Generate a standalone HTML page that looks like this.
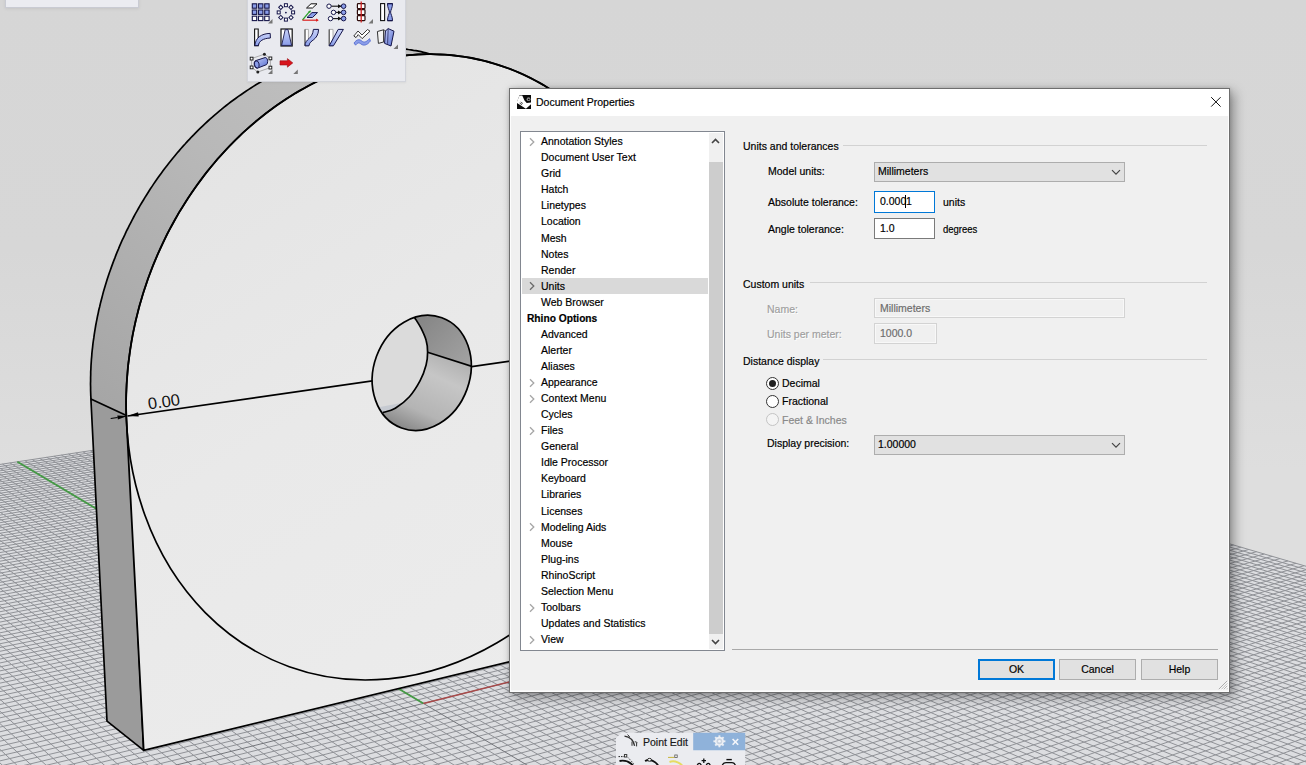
<!DOCTYPE html>
<html><head><meta charset="utf-8"><title>Rhino - Document Properties</title>
<style>
*{box-sizing:border-box;margin:0;padding:0}
html,body{width:1306px;height:765px;overflow:hidden}
body{position:relative;font-family:"Liberation Sans",sans-serif;font-size:11.6px;color:#000;
 background:linear-gradient(#d6d6d6 0,#d7d7d7 250px,#dedede 470px,#dedede 100%)}
.abs{position:absolute}
#scene{position:absolute;left:0;top:0}
.t{position:absolute;white-space:nowrap;-webkit-text-stroke:.2px currentColor;transform-origin:0 50%;transform:scaleX(.905);line-height:16px;height:16px}
.dis{color:#a0a0a0;text-shadow:1px 1px 0 #fff}
/* dialog */
#dlg{position:absolute;left:509px;top:88px;width:721px;height:605px;background:#f0f0f0;border:1px solid #6e6e6e;
 box-shadow:inset 1px 0 #fdfdfd,inset -1px 0 #fdfdfd,inset 0 -1.5px #fdfdfd,4px 4px 11px rgba(0,0,0,.36), 0 0 4px rgba(0,0,0,.16)}
#dlg .title{position:absolute;left:0;top:0;right:0;height:27px;background:#fff}
#tree{position:absolute;left:10px;top:42px;width:205px;height:520px;background:#fff;border:1px solid #828790}
#tree .sb{position:absolute;right:1px;top:1px;width:14px;bottom:1px;background:#f0f0f0}
#tree .thumb{position:absolute;right:1px;top:30px;width:14px;height:472px;background:#cdcdcd}
#tree .sel{position:absolute;left:1px;top:146px;width:186px;height:16px;background:#d9d9d9}
.ti{left:20px}
.chev{position:absolute;left:6px;width:8px;height:10px}
.grp{position:absolute;height:1px;background:#d2d2d2;border-bottom:0}
.combo{position:absolute;background:#e1e1e1;border:1px solid #adadad;height:21px}
.edit{position:absolute;background:#fff;border:1px solid #7a7a7a;height:22px}
.edis{position:absolute;background:#f0f0f0;border:1px solid #d3d3d3;box-shadow:inset 0 0 0 1px #f8f8f8;height:21px}
.btn{position:absolute;top:570px;width:77px;height:22px;background:#e1e1e1;border:1px solid #adadad}
.radio{position:absolute;width:13px;height:13px;border-radius:50%;border:1px solid #333;background:#fff}
</style></head><body>
<svg id="scene" width="1306" height="765" viewBox="0 0 1306 765"><defs>
<linearGradient id="gfill" x1="0" y1="0" x2="0" y2="1"><stop offset="0" stop-color="#dcdde0"/><stop offset="1" stop-color="#dedfe2"/></linearGradient>
<linearGradient id="band" gradientUnits="userSpaceOnUse" x1="400" y1="50" x2="100" y2="400"><stop offset="0" stop-color="#c2c2c2"/><stop offset=".45" stop-color="#b8b8b8"/><stop offset="1" stop-color="#a6a6a6"/></linearGradient>
<linearGradient id="face" gradientUnits="userSpaceOnUse" x1="150" y1="100" x2="520" y2="700"><stop offset="0" stop-color="#e3e3e3"/><stop offset=".5" stop-color="#e9e9e9"/><stop offset="1" stop-color="#ececec"/></linearGradient>
<linearGradient id="hw1" gradientUnits="userSpaceOnUse" x1="425" y1="318" x2="470" y2="362"><stop offset="0" stop-color="#878787"/><stop offset="1" stop-color="#a2a2a2"/></linearGradient>
<linearGradient id="hw2" gradientUnits="userSpaceOnUse" x1="450" y1="355" x2="415" y2="432"><stop offset="0" stop-color="#b0b0b0"/><stop offset=".3" stop-color="#c6c6c6"/><stop offset=".75" stop-color="#b4b4b4"/><stop offset="1" stop-color="#8c8c8c"/></linearGradient>
</defs>
<path d="M-1053.0 3088.4 L-546.6 2740.3 L-140.5 2461.1 L192.3 2232.3 L470.1 2041.4 L705.4 1879.6 L907.3 1740.8 L1082.4 1620.4 L1235.8 1514.9 L1371.2 1421.8 L1491.7 1339.0 L1599.5 1264.9 L1696.6 1198.2 L1784.5 1137.7 L1864.4 1082.8 L1937.4 1032.6 L2004.4 986.6 L2066.0 944.2 L2122.9 905.1 L2175.5 868.9 L2224.5 835.3 L2069.2 789.8 L1928.8 748.6 L1801.0 711.2 L1684.4 677.1 L1577.4 645.7 L1479.0 616.9 L1388.2 590.3 L1304.1 565.7 L1226.0 542.8 L1153.2 521.5 L1085.3 501.6 L1021.8 483.0 L962.2 465.5 L906.3 449.1 L853.6 433.7 L804.0 419.2 L757.1 405.4 L712.7 392.4 L670.6 380.1 L630.8 368.4 L579.2 376.3 L525.7 384.4 L470.3 392.9 L412.9 401.6 L353.2 410.7 L291.3 420.1 L226.9 429.9 L159.8 440.1 L90.1 450.7 L17.4 461.8 L-58.4 473.4 L-137.6 485.4 L-220.3 498.0 L-306.8 511.2 L-397.3 524.9 L-492.2 539.4 L-591.8 554.6 L-696.4 570.5 L-806.4 587.2 L-922.3 604.9 L-923.8 632.7 L-925.4 662.9 L-927.1 695.7 L-929.0 731.7 L-931.1 771.1 L-933.4 814.6 L-935.9 862.7 L-938.7 916.4 L-941.9 976.6 L-945.5 1044.6 L-949.5 1122.0 L-954.2 1210.9 L-959.6 1313.9 L-966.0 1435.0 L-973.6 1579.1 L-982.8 1753.7 L-994.1 1969.3 L-1008.5 2242.7 L-1027.3 2600.3Z" fill="url(#gfill)"/>
<path d="M1306.9 785.0L1326.0 777.7M1284.9 785.0L1326.0 769.4M1262.9 785.0L1326.0 761.2M1240.8 785.0L1326.0 753.3M1218.8 785.0L1326.0 745.4M1196.8 785.0L1326.0 737.7M1174.8 785.0L1326.0 730.2M1152.8 785.0L1326.0 722.8M1130.8 785.0L1326.0 715.5M1108.8 785.0L1326.0 708.4M1086.7 785.0L1326.0 701.4M1064.7 785.0L1326.0 694.5M1042.7 785.0L1326.0 687.7M1020.7 785.0L1326.0 681.1M998.7 785.0L1326.0 674.5M976.7 785.0L1326.0 668.1M954.7 785.0L1326.0 661.8M-6.6 785.0L-20.0 771.8M932.6 785.0L1326.0 655.6M8.4 785.0L-20.0 757.7M910.6 785.0L1326.0 649.5M23.3 785.0L-20.0 744.0M888.6 785.0L1326.0 643.5M38.2 785.0L-20.0 730.8M866.6 785.0L1326.0 637.6M53.1 785.0L-20.0 718.0M844.6 785.0L1326.0 631.8M68.1 785.0L-20.0 705.6M822.6 785.0L1326.0 626.1M83.0 785.0L-20.0 693.5M800.5 785.0L1326.0 620.5M97.9 785.0L-20.0 681.9M778.5 785.0L1326.0 614.9M112.8 785.0L-20.0 670.6M756.5 785.0L1326.0 609.5M127.8 785.0L-20.0 659.6M734.5 785.0L1326.0 604.1M142.7 785.0L-20.0 648.9M712.5 785.0L1326.0 598.8M157.6 785.0L-20.0 638.5M690.5 785.0L1326.0 593.6M172.5 785.0L-20.0 628.5M668.5 785.0L1326.0 588.5M187.5 785.0L-20.0 618.7M646.4 785.0L1326.0 583.5M202.4 785.0L-20.0 609.2M624.4 785.0L1326.0 578.5M217.3 785.0L-20.0 599.9M602.4 785.0L1326.0 573.6M232.2 785.0L-20.0 590.9M580.4 785.0L1320.4 570.4M247.1 785.0L-20.0 582.1M558.4 785.0L1312.2 568.0M262.1 785.0L-20.0 573.6M536.4 785.0L1304.1 565.7M277.0 785.0L-20.0 565.2M514.3 785.0L1296.0 563.3M291.9 785.0L-20.0 557.1M492.3 785.0L1288.0 560.9M306.8 785.0L-20.0 549.2M470.3 785.0L1280.0 558.6M321.8 785.0L-20.0 541.5M448.3 785.0L1272.2 556.3M336.7 785.0L-20.0 533.9M426.3 785.0L1264.3 554.0M351.6 785.0L-20.0 526.6M404.3 785.0L1256.5 551.7M366.5 785.0L-20.0 519.4M382.3 785.0L1248.8 549.5M381.5 785.0L-20.0 512.4M360.2 785.0L1241.1 547.2M396.4 785.0L-20.0 505.5M338.2 785.0L1233.5 545.0M411.3 785.0L-20.0 498.9M316.2 785.0L1226.0 542.8M426.2 785.0L-20.0 492.3M294.2 785.0L1218.5 540.6M441.2 785.0L-20.0 485.9M272.2 785.0L1211.0 538.4M456.1 785.0L-20.0 479.7M250.2 785.0L1203.6 536.2M471.0 785.0L-20.0 473.6M228.1 785.0L1196.3 534.1M485.9 785.0L-20.0 467.6M206.1 785.0L1189.0 531.9M500.8 785.0L-12.6 466.4M184.1 785.0L1181.7 529.8M515.8 785.0L-5.0 465.2M162.1 785.0L1174.5 527.7M530.7 785.0L2.5 464.1M140.1 785.0L1167.4 525.6M545.6 785.0L9.9 462.9M118.1 785.0L1160.3 523.5M575.5 785.0L24.8 460.7M74.0 785.0L1146.2 519.4M590.4 785.0L32.2 459.6M52.0 785.0L1139.3 517.4M605.3 785.0L39.5 458.4M30.0 785.0L1132.4 515.4M620.2 785.0L46.8 457.3M8.0 785.0L1125.5 513.4M635.2 785.0L54.1 456.2M-14.0 785.0L1118.7 511.4M650.1 785.0L61.4 455.1M-20.0 781.2L1111.9 509.4M665.0 785.0L68.6 454.0M-20.0 775.9L1105.2 507.4M679.9 785.0L75.8 452.9M-20.0 770.8L1098.5 505.5M694.9 785.0L82.9 451.8M-20.0 765.6L1091.9 503.5M709.8 785.0L90.1 450.7M-20.0 760.6L1085.3 501.6M724.7 785.0L97.2 449.7M-20.0 755.6L1078.8 499.7M739.6 785.0L104.3 448.6M-20.0 750.7L1072.3 497.8M754.5 785.0L111.3 447.5M-20.0 745.8L1065.8 495.9M769.5 785.0L118.3 446.4M-20.0 741.0L1059.4 494.0M784.4 785.0L125.3 445.4M-20.0 736.3L1053.0 492.1M799.3 785.0L132.3 444.3M-20.0 731.6L1046.7 490.3M814.2 785.0L139.2 443.3M-20.0 726.9L1040.4 488.4M829.2 785.0L146.1 442.2M-20.0 722.3L1034.2 486.6M844.1 785.0L153.0 441.2M-20.0 717.8L1028.0 484.8M859.0 785.0L159.8 440.1M-20.0 713.3L1021.8 483.0M873.9 785.0L166.7 439.1M-20.0 708.9L1015.7 481.2M888.9 785.0L173.5 438.1M-20.0 704.5L1009.6 479.4M903.8 785.0L180.2 437.0M-20.0 700.1L1003.5 477.6M918.7 785.0L187.0 436.0M-20.0 695.9L997.5 475.9M933.6 785.0L193.7 435.0M-20.0 691.6L991.5 474.1M948.6 785.0L200.4 434.0M-20.0 687.4L985.6 472.4M963.5 785.0L207.0 432.9M-20.0 683.3L979.7 470.6M978.4 785.0L213.7 431.9M-20.0 679.2L973.9 468.9M993.3 785.0L220.3 430.9M-20.0 675.1L968.0 467.2M1008.2 785.0L226.9 429.9M-20.0 671.1L962.2 465.5M1023.2 785.0L233.4 428.9M-20.0 667.1L956.5 463.8M1038.1 785.0L239.9 427.9M-20.0 663.2L950.8 462.2M1053.0 785.0L246.4 426.9M-20.0 659.3L945.1 460.5M1067.9 785.0L252.9 426.0M-20.0 655.4L939.4 458.9M1082.9 785.0L259.4 425.0M-20.0 651.6L933.8 457.2M1097.8 785.0L265.8 424.0M-20.0 647.8L928.3 455.6M1112.7 785.0L272.2 423.0M-20.0 644.1L922.7 454.0M1127.6 785.0L278.6 422.0M-20.0 640.4L917.2 452.3M1142.6 785.0L284.9 421.1M-20.0 636.8L911.7 450.7M1157.5 785.0L291.3 420.1M-20.0 633.1L906.3 449.1M1172.4 785.0L297.6 419.2M-20.0 629.5L900.9 447.6M1187.3 785.0L303.8 418.2M-20.0 626.0L895.5 446.0M1202.3 785.0L310.1 417.2M-20.0 622.5L890.2 444.4M1217.2 785.0L316.3 416.3M-20.0 619.0L884.8 442.9M1232.1 785.0L322.5 415.4M-20.0 615.6L879.6 441.3M1247.0 785.0L328.7 414.4M-20.0 612.2L874.3 439.8M1261.9 785.0L334.9 413.5M-20.0 608.8L869.1 438.2M1276.9 785.0L341.0 412.5M-20.0 605.4L863.9 436.7M1291.8 785.0L347.1 411.6M-20.0 602.1L858.7 435.2M1306.7 785.0L353.2 410.7M-20.0 598.9L853.6 433.7M1321.6 785.0L359.3 409.8M-20.0 595.6L848.5 432.2M1326.0 780.9L365.3 408.8M-20.0 592.4L843.5 430.7M1326.0 775.2L371.4 407.9M-20.0 589.2L838.4 429.3M1326.0 769.6L377.4 407.0M-20.0 586.1L833.4 427.8M1326.0 764.0L383.3 406.1M-20.0 582.9L828.4 426.3M1326.0 758.5L389.3 405.2M-20.0 579.8L823.5 424.9M1326.0 753.1L395.2 404.3M-20.0 576.8L818.6 423.4M1326.0 747.7L401.1 403.4M-20.0 573.7L813.7 422.0M1326.0 742.4L407.0 402.5M-20.0 570.7L808.8 420.6M1326.0 737.2L412.9 401.6M-20.0 567.7L804.0 419.2M1326.0 732.1L418.7 400.7M-20.0 564.8L799.1 417.8M1326.0 727.0L424.5 399.8M-20.0 561.9L794.4 416.4M1326.0 722.0L430.3 398.9M-20.0 559.0L789.6 415.0M1326.0 717.0L436.1 398.1M-20.0 556.1L784.9 413.6M1326.0 712.1L441.9 397.2M-20.0 553.2L780.2 412.2M1326.0 707.3L447.6 396.3M-20.0 550.4L775.5 410.8M1326.0 702.5L453.3 395.4M-20.0 547.6L770.8 409.5M1326.0 697.8L459.0 394.6M-20.0 544.8L766.2 408.1M1326.0 693.1L464.7 393.7M-20.0 542.1L761.6 406.8M1326.0 688.5L470.3 392.9M-20.0 539.4L757.1 405.4M1326.0 684.0L476.0 392.0M-20.0 536.7L752.5 404.1M1326.0 679.5L481.6 391.1M-20.0 534.0L748.0 402.8M1326.0 675.0L487.2 390.3M-20.0 531.3L743.5 401.5M1326.0 670.6L492.7 389.4M-20.0 528.7L739.0 400.1M1326.0 666.3L498.3 388.6M-20.0 526.1L734.6 398.8M1326.0 662.0L503.8 387.8M-20.0 523.5L730.1 397.5M1326.0 657.8L509.3 386.9M-20.0 521.0L725.7 396.3M1326.0 653.6L514.8 386.1M-20.0 518.4L721.4 395.0M1326.0 649.4L520.3 385.3M-20.0 515.9L717.0 393.7M1326.0 645.3L525.7 384.4M-20.0 513.4L712.7 392.4M1326.0 641.3L531.2 383.6M-20.0 510.9L708.4 391.2M1326.0 637.3L536.6 382.8M-20.0 508.5L704.1 389.9M1326.0 633.3L542.0 381.9M-20.0 506.0L699.8 388.7M1326.0 629.4L547.3 381.1M-20.0 503.6L695.6 387.4M1326.0 625.5L552.7 380.3M-20.0 501.2L691.4 386.2M1326.0 621.7L558.0 379.5M-20.0 498.8L687.2 385.0M1326.0 617.9L563.3 378.7M-20.0 496.5L683.0 383.7M1326.0 614.1L568.6 377.9M-20.0 494.1L678.9 382.5M1326.0 610.4L573.9 377.1M-20.0 491.8L674.7 381.3M1326.0 606.7L579.2 376.3M-20.0 489.5L670.6 380.1M1326.0 603.1L584.4 375.5M-20.0 487.2L666.6 378.9M1326.0 599.5L589.6 374.7M-20.0 485.0L662.5 377.7M1326.0 596.0L594.8 373.9M-20.0 482.7L658.5 376.5M1326.0 592.4L600.0 373.1M-20.0 480.5L654.4 375.4M1326.0 589.0L605.2 372.3M-20.0 478.3L650.4 374.2M1326.0 585.5L610.3 371.5M-20.0 476.1L646.5 373.0M1326.0 582.1L615.5 370.8M-20.0 473.9L642.5 371.9M1326.0 578.7L620.6 370.0M-20.0 471.8L638.6 370.7M1326.0 575.4L625.7 369.2M-20.0 469.6L634.7 369.6M1326.0 572.1L630.8 368.4M-20.0 467.5L630.8 368.4" stroke="#909297" stroke-width="1" fill="none"/>
<path d="M560.5 785.0L17.4 461.8M96.1 785.0L1153.2 521.5" stroke="#75777c" stroke-width="1" fill="none"/>
<path d="M17.4 461.8L423.4 703.4" stroke="#459a45" stroke-width="1.8"/>
<path d="M423.4 703.4L1153.2 521.5" stroke="#a84a4a" stroke-width="1.5"/>
<path d="M91.0 399.0 L90.8 396.0 L90.7 393.0 L90.6 390.0 L90.6 387.0 L90.5 383.9 L90.6 380.9 L90.6 377.9 L90.7 374.8 L90.7 371.8 L90.9 368.7 L91.0 365.6 L91.2 362.6 L91.4 359.5 L91.7 356.4 L91.9 353.3 L92.2 350.3 L92.6 347.2 L92.9 344.1 L93.3 341.0 L93.8 337.9 L94.2 334.8 L94.7 331.7 L95.2 328.6 L95.7 325.5 L96.3 322.4 L96.9 319.3 L97.5 316.2 L98.2 313.1 L98.8 310.0 L99.6 307.0 L100.3 303.9 L101.1 300.8 L101.9 297.7 L102.7 294.6 L103.5 291.5 L104.4 288.5 L105.3 285.4 L106.3 282.3 L107.2 279.3 L108.2 276.2 L109.2 273.2 L110.3 270.2 L111.4 267.1 L112.5 264.1 L113.6 261.1 L114.8 258.1 L115.9 255.1 L117.1 252.1 L118.4 249.1 L119.6 246.1 L120.9 243.2 L122.2 240.2 L123.6 237.3 L125.0 234.4 L126.3 231.4 L127.8 228.5 L129.2 225.6 L130.7 222.8 L132.2 219.9 L133.7 217.0 L135.2 214.2 L136.8 211.4 L138.4 208.5 L140.0 205.7 L141.6 203.0 L143.3 200.2 L145.0 197.4 L146.7 194.7 L148.4 192.0 L150.1 189.3 L151.9 186.6 L153.7 183.9 L155.5 181.3 L157.4 178.6 L159.2 176.0 L161.1 173.4 L163.0 170.8 L164.9 168.3 L166.9 165.7 L168.8 163.2 L170.8 160.7 L172.8 158.2 L174.9 155.7 L176.9 153.3 L179.0 150.9 L181.0 148.5 L183.1 146.1 L185.3 143.8 L187.4 141.4 L189.6 139.1 L191.7 136.8 L193.9 134.6 L196.1 132.3 L198.3 130.1 L200.6 127.9 L202.8 125.8 L205.1 123.6 L207.4 121.5 L209.7 119.4 L212.0 117.4 L214.3 115.3 L216.7 113.3 L219.0 111.3 L221.4 109.4 L223.8 107.4 L226.2 105.5 L228.6 103.6 L231.0 101.8 L233.5 100.0 L235.9 98.2 L238.4 96.4 L240.9 94.7 L243.4 93.0 L245.9 91.3 L248.4 89.6 L250.9 88.0 L253.4 86.4 L255.9 84.8 L258.5 83.3 L261.0 81.8 L263.6 80.3 L266.2 78.9 L268.8 77.5 L271.3 76.1 L273.9 74.7 L276.5 73.4 L279.1 72.1 L281.8 70.9 L284.4 69.6 L287.0 68.4 L289.6 67.3 L292.3 66.1 L294.9 65.0 L297.6 64.0 L300.2 62.9 L302.9 61.9 L305.5 61.0 L308.2 60.0 L310.9 59.1 L313.5 58.3 L316.2 57.4 L318.9 56.6 L321.5 55.8 L324.2 55.1 L326.9 54.4 L329.6 53.7 L332.2 53.1 L334.9 52.5 L337.6 51.9 L340.3 51.4 L342.9 50.9 L345.6 50.4 L348.3 50.0 L350.9 49.6 L353.6 49.2 L356.3 48.9 L358.9 48.6 L361.6 48.3 L364.2 48.1 L366.9 47.9 L369.5 47.7 L372.2 47.6 L374.8 47.5 L377.4 47.5 L380.0 47.4 L382.7 47.4 L385.3 47.5 L387.9 47.6 L390.5 47.7 L393.1 47.8 L395.6 48.0 L398.2 48.2 L400.8 48.5 L403.3 48.8 L405.9 49.1 L408.4 49.5 L411.0 49.8 L413.5 50.3 L416.0 50.7 L418.5 51.2 L421.0 51.7 L423.5 52.3 L425.9 52.9 L428.4 53.5 L430.8 54.2 L433.2 54.9 L433.3 54.3 L431.0 54.2 L428.6 54.2 L426.3 54.3 L423.9 54.3 L421.6 54.4 L419.2 54.5 L416.8 54.6 L414.5 54.7 L412.1 54.9 L409.8 55.1 L407.4 55.3 L405.0 55.5 L402.7 55.8 L400.3 56.1 L397.9 56.4 L395.6 56.7 L393.2 57.1 L390.8 57.4 L388.5 57.9 L386.1 58.3 L383.8 58.7 L381.4 59.2 L379.0 59.7 L376.7 60.2 L374.3 60.8 L372.0 61.3 L369.6 61.9 L367.3 62.5 L364.9 63.2 L362.6 63.8 L360.2 64.5 L357.9 65.2 L355.5 65.9 L353.2 66.7 L350.9 67.4 L348.6 68.2 L346.2 69.1 L343.9 69.9 L341.6 70.8 L339.3 71.6 L337.0 72.5 L334.7 73.5 L332.4 74.4 L330.1 75.4 L327.8 76.4 L325.5 77.4 L323.2 78.5 L321.0 79.5 L318.7 80.6 L316.4 81.7 L314.2 82.8 L311.9 84.0 L309.7 85.2 L307.5 86.3 L305.2 87.6 L303.0 88.8 L300.8 90.1 L298.6 91.3 L296.4 92.6 L294.2 93.9 L292.0 95.3 L289.8 96.6 L287.7 98.0 L285.5 99.4 L283.4 100.8 L281.2 102.3 L279.1 103.7 L277.0 105.2 L274.9 106.7 L272.8 108.2 L270.7 109.8 L268.6 111.3 L266.5 112.9 L264.4 114.5 L262.4 116.1 L260.3 117.8 L258.3 119.4 L256.3 121.1 L254.3 122.8 L252.3 124.5 L250.3 126.2 L248.3 128.0 L246.3 129.8 L244.4 131.5 L242.4 133.3 L240.5 135.2 L238.6 137.0 L236.6 138.9 L234.8 140.7 L232.9 142.6 L231.0 144.5 L229.1 146.4 L227.3 148.4 L225.4 150.3 L223.6 152.3 L221.8 154.3 L220.0 156.3 L218.2 158.3 L216.5 160.4 L214.7 162.4 L213.0 164.5 L211.2 166.6 L209.5 168.7 L207.8 170.8 L206.2 172.9 L204.5 175.1 L202.8 177.2 L201.2 179.4 L199.6 181.6 L198.0 183.8 L196.4 186.0 L194.8 188.2 L193.2 190.5 L191.7 192.7 L190.1 195.0 L188.6 197.3 L187.1 199.6 L185.6 201.9 L184.2 204.2 L182.7 206.5 L181.3 208.9 L179.8 211.2 L178.4 213.6 L177.1 216.0 L175.7 218.4 L174.3 220.8 L173.0 223.2 L171.7 225.6 L170.4 228.0 L169.1 230.5 L167.8 232.9 L166.6 235.4 L165.3 237.9 L164.1 240.4 L162.9 242.9 L161.7 245.4 L160.6 247.9 L159.4 250.4 L158.3 252.9 L157.2 255.5 L156.1 258.0 L155.0 260.6 L154.0 263.1 L152.9 265.7 L151.9 268.3 L150.9 270.9 L150.0 273.5 L149.0 276.1 L148.1 278.7 L147.1 281.3 L146.2 283.9 L145.3 286.6 L144.5 289.2 L143.6 291.8 L142.8 294.5 L142.0 297.1 L141.2 299.8 L140.4 302.5 L139.7 305.1 L139.0 307.8 L138.3 310.5 L137.6 313.2 L136.9 315.9 L136.2 318.5 L135.6 321.2 L135.0 323.9 L134.4 326.6 L133.8 329.3 L133.3 332.0 L132.8 334.7 L132.2 337.5 L131.8 340.2 L131.3 342.9 L130.8 345.6 L130.4 348.3 L130.0 351.0 L129.6 353.8 L129.2 356.5 L128.9 359.2 L128.6 361.9 L128.2 364.7 L128.0 367.4 L127.7 370.1 L127.4 372.8 L127.2 375.6 L127.0 378.3 L126.8 381.0 L126.7 383.7 L126.5 386.4 L126.4 389.2 L126.3 391.9 L126.2 394.6 L126.1 397.3 L126.1 400.0 L126.1 402.7 L126.1 405.4 L126.1 408.1 L126.1 410.8 L126.2 413.5 L126.3 416.2Z" fill="url(#band)"/>
<path d="M91.0 399.0 L90.8 396.0 L90.7 393.0 L90.6 390.0 L90.6 387.0 L90.5 383.9 L90.6 380.9 L90.6 377.9 L90.7 374.8 L90.7 371.8 L90.9 368.7 L91.0 365.6 L91.2 362.6 L91.4 359.5 L91.7 356.4 L91.9 353.3 L92.2 350.3 L92.6 347.2 L92.9 344.1 L93.3 341.0 L93.8 337.9 L94.2 334.8 L94.7 331.7 L95.2 328.6 L95.7 325.5 L96.3 322.4 L96.9 319.3 L97.5 316.2 L98.2 313.1 L98.8 310.0 L99.6 307.0 L100.3 303.9 L101.1 300.8 L101.9 297.7 L102.7 294.6 L103.5 291.5 L104.4 288.5 L105.3 285.4 L106.3 282.3 L107.2 279.3 L108.2 276.2 L109.2 273.2 L110.3 270.2 L111.4 267.1 L112.5 264.1 L113.6 261.1 L114.8 258.1 L115.9 255.1 L117.1 252.1 L118.4 249.1 L119.6 246.1 L120.9 243.2 L122.2 240.2 L123.6 237.3 L125.0 234.4 L126.3 231.4 L127.8 228.5 L129.2 225.6 L130.7 222.8 L132.2 219.9 L133.7 217.0 L135.2 214.2 L136.8 211.4 L138.4 208.5 L140.0 205.7 L141.6 203.0 L143.3 200.2 L145.0 197.4 L146.7 194.7 L148.4 192.0 L150.1 189.3 L151.9 186.6 L153.7 183.9 L155.5 181.3 L157.4 178.6 L159.2 176.0 L161.1 173.4 L163.0 170.8 L164.9 168.3 L166.9 165.7 L168.8 163.2 L170.8 160.7 L172.8 158.2 L174.9 155.7 L176.9 153.3 L179.0 150.9 L181.0 148.5 L183.1 146.1 L185.3 143.8 L187.4 141.4 L189.6 139.1 L191.7 136.8 L193.9 134.6 L196.1 132.3 L198.3 130.1 L200.6 127.9 L202.8 125.8 L205.1 123.6 L207.4 121.5 L209.7 119.4 L212.0 117.4 L214.3 115.3 L216.7 113.3 L219.0 111.3 L221.4 109.4 L223.8 107.4 L226.2 105.5 L228.6 103.6 L231.0 101.8 L233.5 100.0 L235.9 98.2 L238.4 96.4 L240.9 94.7 L243.4 93.0 L245.9 91.3 L248.4 89.6 L250.9 88.0 L253.4 86.4 L255.9 84.8 L258.5 83.3 L261.0 81.8 L263.6 80.3 L266.2 78.9 L268.8 77.5 L271.3 76.1 L273.9 74.7 L276.5 73.4 L279.1 72.1 L281.8 70.9 L284.4 69.6 L287.0 68.4 L289.6 67.3 L292.3 66.1 L294.9 65.0 L297.6 64.0 L300.2 62.9 L302.9 61.9 L305.5 61.0 L308.2 60.0 L310.9 59.1 L313.5 58.3 L316.2 57.4 L318.9 56.6 L321.5 55.8 L324.2 55.1 L326.9 54.4 L329.6 53.7 L332.2 53.1 L334.9 52.5 L337.6 51.9 L340.3 51.4 L342.9 50.9 L345.6 50.4 L348.3 50.0 L350.9 49.6 L353.6 49.2 L356.3 48.9 L358.9 48.6 L361.6 48.3 L364.2 48.1 L366.9 47.9 L369.5 47.7 L372.2 47.6 L374.8 47.5 L377.4 47.5 L380.0 47.4 L382.7 47.4 L385.3 47.5 L387.9 47.6 L390.5 47.7 L393.1 47.8 L395.6 48.0 L398.2 48.2 L400.8 48.5 L403.3 48.8 L405.9 49.1 L408.4 49.5 L411.0 49.8 L413.5 50.3 L416.0 50.7 L418.5 51.2 L421.0 51.7 L423.5 52.3 L425.9 52.9 L428.4 53.5 L430.8 54.2 L433.2 54.9" fill="none" stroke="#000" stroke-width="1.7"/>
<path d="M90.9 399.0 L127.5 416.0 L143.7 750.3 L107.0 721.2Z" fill="#9b9b9b" stroke="#000" stroke-width="1.7" stroke-linejoin="round"/>
<path d="M143.7 750.3 L126.3 416.2 L126.1 411.0 L126.1 405.7 L126.1 400.4 L126.2 395.1 L126.4 389.8 L126.6 384.5 L127.0 379.2 L127.4 373.9 L127.8 368.5 L128.4 363.2 L129.1 357.9 L129.8 352.6 L130.6 347.3 L131.4 342.0 L132.4 336.7 L133.4 331.4 L134.5 326.1 L135.7 320.8 L137.0 315.6 L138.3 310.3 L139.7 305.1 L141.2 299.9 L142.7 294.7 L144.4 289.5 L146.1 284.4 L147.8 279.3 L149.7 274.2 L151.6 269.1 L153.6 264.1 L155.7 259.1 L157.8 254.1 L160.0 249.2 L162.3 244.2 L164.6 239.4 L167.0 234.5 L169.5 229.7 L172.0 225.0 L174.6 220.3 L177.3 215.6 L180.0 210.9 L182.8 206.4 L185.7 201.8 L188.6 197.3 L191.6 192.9 L194.6 188.5 L197.7 184.1 L200.8 179.9 L204.0 175.6 L207.3 171.4 L210.6 167.3 L214.0 163.2 L217.4 159.2 L220.9 155.3 L224.5 151.4 L228.0 147.6 L231.7 143.8 L235.3 140.1 L239.1 136.5 L242.8 132.9 L246.7 129.4 L250.5 126.0 L254.4 122.7 L258.4 119.4 L262.4 116.2 L266.4 113.0 L270.4 110.0 L274.5 107.0 L278.7 104.0 L282.8 101.2 L287.0 98.4 L291.3 95.8 L295.5 93.1 L299.8 90.6 L304.2 88.2 L308.5 85.8 L312.9 83.5 L317.3 81.3 L321.7 79.2 L326.1 77.1 L330.6 75.2 L335.1 73.3 L339.6 71.5 L344.1 69.8 L348.6 68.2 L353.2 66.7 L357.8 65.2 L362.3 63.9 L366.9 62.6 L371.5 61.4 L376.1 60.3 L380.7 59.3 L385.3 58.4 L389.9 57.6 L394.6 56.9 L399.2 56.2 L403.8 55.7 L408.4 55.2 L413.0 54.8 L417.6 54.5 L422.2 54.3 L426.8 54.2 L431.4 54.2 L436.0 54.3 L440.6 54.5 L445.1 54.7 L449.7 55.1 L454.2 55.5 L458.7 56.1 L463.2 56.7 L467.7 57.4 L472.1 58.2 L476.5 59.1 L480.9 60.0 L485.3 61.1 L489.7 62.3 L494.0 63.5 L498.3 64.8 L502.6 66.3 L506.8 67.8 L511.1 69.3 L515.2 71.0 L519.4 72.8 L523.5 74.6 L527.6 76.6 L531.6 78.6 L535.6 80.7 L539.6 82.9 L543.5 85.1 L547.3 87.5 L551.2 89.9 L555.0 92.4 L558.7 95.0 L562.4 97.7 L566.1 100.4 L569.7 103.2 L573.2 106.1 L576.7 109.1 L580.1 112.1 L583.5 115.3 L586.9 118.5 L590.2 121.7 L593.4 125.1 L596.6 128.5 L599.7 131.9 L602.7 135.5 L605.7 139.1 L608.7 142.8 L611.6 146.5 L614.4 150.3 L617.1 154.2 L619.8 158.1 L622.4 162.1 L625.0 166.1 L627.5 170.3 L629.9 174.4 L632.3 178.6 L634.6 182.9 L636.8 187.2 L638.9 191.6 L641.0 196.0 L643.0 200.5 L645.0 205.1 L646.9 209.6 L648.7 214.2 L650.4 218.9 L652.0 223.6 L653.6 228.4 L655.1 233.2 L656.6 238.0 L657.9 242.8 L659.2 247.7 L660.4 252.7 L661.5 257.7 L662.6 262.7 L663.6 267.7 L664.5 272.7 L665.3 277.8 L666.0 282.9 L666.7 288.1 L667.3 293.2 L667.8 298.4 L668.3 303.6 L668.6 308.8 L668.9 314.1 L669.1 319.3 L669.2 324.6 L669.3 329.9 L669.2 335.1 L669.1 340.4 L668.9 345.8 L668.6 351.1 L668.3 356.4 L667.9 361.7 L667.4 367.0 L666.8 372.3 L666.1 377.7 L665.4 383.0 L664.6 388.3 L663.7 393.6 L662.7 398.9 L672.7 622.2Z" fill="url(#face)" stroke="#000" stroke-width="1.8" stroke-linejoin="round"/>
<ellipse cx="397.67" cy="367.11" rx="264.81" ry="318.64" transform="rotate(-160.11 397.67 367.11)" fill="none" stroke="#000" stroke-width="1.7"/>
<path d="M127.5 416L700 333.8" stroke="#000" stroke-width="1.7"/>
<clipPath id="hc"><ellipse cx="421.73" cy="372.84" rx="48.16" ry="58.70" transform="rotate(-159.90 421.73 372.84)"/></clipPath>
<g clip-path="url(#hc)">
<rect x="360" y="300" width="130" height="140" fill="#dbdbdb"/>
<path d="M372 408.6L405 402.2L405 425L372 425Z" fill="#c6cad1"/>
<path d="M414.7 317.7C415.7 319.4 418.9 324.2 420.9 327.9C422.8 331.7 425.0 336.2 426.1 340.3C427.3 344.3 427.3 350.3 427.6 352.3L472.0 366.4L500 300L440 300Z" fill="url(#hw1)"/>
<path d="M382.9 412.6C385.0 411.9 390.9 410.8 395.3 408.2C399.7 405.5 405.3 401.3 409.4 396.7C413.5 392.2 417.2 386.1 420.0 380.9C422.8 375.6 424.9 369.7 426.1 365.0C427.4 360.2 427.3 354.4 427.6 352.3L472.0 366.4L500 440L380 445Z" fill="url(#hw2)"/>
<path d="M414.7 317.7C415.7 319.4 418.9 324.2 420.9 327.9C422.8 331.7 425.0 336.2 426.1 340.3C427.3 344.3 427.6 348.2 427.6 352.3C427.6 356.4 427.4 360.2 426.1 365.0C424.9 369.7 422.8 375.6 420.0 380.9C417.2 386.1 413.5 392.2 409.4 396.7C405.3 401.3 399.7 405.5 395.3 408.2C390.9 410.8 385.0 411.9 382.9 412.6" fill="none" stroke="#000" stroke-width="1.7"/>
<path d="M427.6 352.3L472.0 366.4" stroke="#000" stroke-width="1.7"/>
</g>
<ellipse cx="421.73" cy="372.84" rx="48.16" ry="58.70" transform="rotate(-159.90 421.73 372.84)" fill="none" stroke="#000" stroke-width="1.7"/>
<g transform="translate(127.5 416) rotate(-8.17)"><path d="M0 0L11 -2.2L11 2.2Z" fill="#000"/><path d="M0 0L-10 -2L-10 2Z" fill="#000"/><path d="M-10 0L-17 0" stroke="#000" stroke-width="1"/><text x="22" y="-3.3" font-family="Liberation Sans, sans-serif" font-size="16.5" fill="#111">0.00</text></g>
</svg>
<!-- top-left panel remnant -->
<div class="abs" style="left:5px;top:-3px;width:134px;height:11px;background:#ebecf1;border:1px solid #c9cbd3;box-shadow:0 1px 3px rgba(0,0,0,.08)"></div>
<!-- floating toolbar -->
<div class="abs" style="left:247px;top:-3px;width:159px;height:84.5px;background:#e9eaef;border:1px solid #d2d4db;box-shadow:0 1px 2px rgba(0,0,0,.06)"></div>
<svg class="abs" style="left:0;top:0" width="1306" height="90" viewBox="0 0 1306 90"><defs><linearGradient id="ib" x1="0" y1="0" x2="1" y2="1"><stop offset="0" stop-color="#c6d0f8"/><stop offset="1" stop-color="#566dd0"/></linearGradient><linearGradient id="ib2" x1="0" y1="0" x2="0" y2="1"><stop offset="0" stop-color="#c6d0f8"/><stop offset="1" stop-color="#8a9de9"/></linearGradient></defs>
<rect x="252.3" y="3.8" width="4.4" height="4.4" fill="#8a9de9" stroke="#16164a" stroke-width="1.1"/>
<rect x="258.5" y="3.8" width="4.4" height="4.4" fill="#8a9de9" stroke="#16164a" stroke-width="1.1"/>
<rect x="264.7" y="3.8" width="4.4" height="4.4" fill="#8a9de9" stroke="#16164a" stroke-width="1.1"/>
<rect x="252.3" y="10.0" width="4.4" height="4.4" fill="#8a9de9" stroke="#16164a" stroke-width="1.1"/>
<rect x="258.5" y="10.0" width="4.4" height="4.4" fill="#8a9de9" stroke="#16164a" stroke-width="1.1"/>
<rect x="264.7" y="10.0" width="4.4" height="4.4" fill="#8a9de9" stroke="#16164a" stroke-width="1.1"/>
<rect x="252.3" y="16.2" width="4.4" height="4.4" fill="#fff" stroke="#16164a" stroke-width="1.1"/>
<rect x="258.5" y="16.2" width="4.4" height="4.4" fill="#fff" stroke="#16164a" stroke-width="1.1"/>
<rect x="264.7" y="16.2" width="4.4" height="4.4" fill="#fff" stroke="#16164a" stroke-width="1.1"/>
<path d="M272.5 19.0L272.5 23.5L268.0 23.5Z" fill="#767676"/>
<rect x="291.6" y="10.9" width="3" height="3" fill="#fff" stroke="#16164a" stroke-width="1" transform="rotate(0 293.1 12.4)"/>
<rect x="289.5" y="16.0" width="3" height="3" fill="#fff" stroke="#16164a" stroke-width="1" transform="rotate(45 291.0 17.5)"/>
<rect x="284.4" y="18.1" width="3" height="3" fill="#fff" stroke="#16164a" stroke-width="1" transform="rotate(0 285.9 19.6)"/>
<rect x="279.3" y="16.0" width="3" height="3" fill="#fff" stroke="#16164a" stroke-width="1" transform="rotate(45 280.8 17.5)"/>
<rect x="277.2" y="10.9" width="3" height="3" fill="#fff" stroke="#16164a" stroke-width="1" transform="rotate(0 278.7 12.4)"/>
<rect x="279.3" y="5.8" width="3" height="3" fill="#fff" stroke="#16164a" stroke-width="1" transform="rotate(45 280.8 7.3)"/>
<rect x="284.4" y="3.7" width="3" height="3" fill="#fff" stroke="#16164a" stroke-width="1" transform="rotate(0 285.9 5.2)"/>
<rect x="289.5" y="5.8" width="3" height="3" fill="#fff" stroke="#16164a" stroke-width="1" transform="rotate(45 291.0 7.3)"/>
<circle cx="285.9" cy="12.6" r="0.9" fill="#16164a"/>
<path d="M306.5 8L311 3.8L317 3.8L312.5 8Z" fill="#fff" stroke="#111" stroke-width="1"/>
<path d="M307 17.5L312 12.6L317.5 12.6L312.5 17.5Z" fill="#8a9de9" stroke="#16164a" stroke-width="1"/>
<path d="M302.5 20L309 12.2L310.5 11" stroke="#2aa02a" stroke-width="1.2" fill="none"/><path d="M302.5 20.2L318 20.2" stroke="#d22" stroke-width="1.2"/><path d="M318.8 20.2L316 18.6L316 21.8Z" fill="#d22"/><path d="M310.8 10.6L308.2 11.2L310 13Z" fill="#2aa02a"/>
<path d="M331 6.2L341 6.2" stroke="#111" stroke-width="1.1"/><path d="M341.5 6.2L338 4.2L338 8.2Z" fill="#111"/>
<circle cx="329" cy="6.2" r="2.2" fill="#fff" stroke="#16164a" stroke-width="1"/>
<circle cx="343.6" cy="6.2" r="2.3" fill="#8a9de9" stroke="#16164a" stroke-width="1"/>
<path d="M335.5 12.4L341 12.4" stroke="#111" stroke-width="1.1"/><path d="M341.5 12.4L338 10.4L338 14.4Z" fill="#111"/>
<circle cx="333.5" cy="12.4" r="2.2" fill="#fff" stroke="#16164a" stroke-width="1"/>
<circle cx="343.6" cy="12.4" r="2.3" fill="#8a9de9" stroke="#16164a" stroke-width="1"/>
<path d="M332.5 18.6L341 18.6" stroke="#111" stroke-width="1.1"/><path d="M341.5 18.6L338 16.6L338 20.6Z" fill="#111"/>
<circle cx="330.5" cy="18.6" r="2.2" fill="#fff" stroke="#16164a" stroke-width="1"/>
<circle cx="343.6" cy="18.6" r="2.3" fill="#8a9de9" stroke="#16164a" stroke-width="1"/>
<rect x="357.4" y="3.6" width="7.6" height="5" rx="0.8" fill="#fff" stroke="#2e0c0c" stroke-width="1.2"/>
<rect x="357.4" y="9.6" width="7.6" height="5" rx="0.8" fill="#fff" stroke="#2e0c0c" stroke-width="1.2"/>
<rect x="357.4" y="15.6" width="7.6" height="5" rx="0.8" fill="#fff" stroke="#2e0c0c" stroke-width="1.2"/>
<path d="M361.2 1.5L361.2 22.5" stroke="#d02020" stroke-width="1.3"/>
<path d="M373 19.0L373 23.5L368.5 23.5Z" fill="#767676"/>
<rect x="380.6" y="3.6" width="4" height="17" fill="#fff" stroke="#111" stroke-width="1.1"/>
<path d="M387.5 3.6L392.5 3.6C392.5 8 390.6 10 390.6 12.1C390.6 14.2 392.5 16.2 392.5 20.6L387.5 20.6C387.5 16.2 389.4 14.2 389.4 12.1C389.4 10 387.5 8 387.5 3.6Z" fill="#8a9de9" stroke="#16164a" stroke-width="1"/>
<path d="M387.5 3.6L392.5 3.6M387.5 20.6L392.5 20.6" stroke="#16164a" stroke-width="1.4"/>
<path d="M254.6 29L254.6 45.8L258.2 45.8L258.2 29Z" fill="#fff" stroke="#111" stroke-width="1.1"/>
<path d="M254.8 45.6C255.5 38 261 33.6 270.2 33.4L270.4 38C263 38.4 259 41 258.4 45.6Z" fill="url(#ib2)" stroke="#16164a" stroke-width="1"/>
<rect x="281" y="29" width="11.2" height="17" fill="#fff" stroke="#111" stroke-width="1.2"/>
<path d="M281.6 45.4L285.2 29.6L288 29.6L291.6 45.4Z" fill="url(#ib2)" stroke="#16164a" stroke-width=".9"/>
<path d="M305 29.4L305 45.8L308.4 45.8L308.4 29.4Z" fill="#fff" stroke="#999" stroke-width=".8"/><path d="M305 29.4L305 45.8" stroke="#444" stroke-width="1"/>
<path d="M305 45.8C305 38.5 312.6 39.5 313.4 29.4L318.6 29.4C318 41 309.4 39.5 309 45.8Z" fill="url(#ib2)" stroke="#16164a" stroke-width="1"/>
<path d="M329.2 29.4L329.2 45.8L333 45.8L333 29.4Z" fill="#fff" stroke="#999" stroke-width=".8"/><path d="M329.2 29.4L329.2 45.8" stroke="#444" stroke-width="1"/>
<path d="M329.2 45.8L333 38.8L333 45.8Z" fill="#4a60c4"/><path d="M329.2 45.8L338.2 29.4L343.4 29.4L333.4 45.8Z" fill="url(#ib2)" fill-opacity=".9" stroke="#16164a" stroke-width="1"/>
<path d="M353.8 36L358 31L362 35L367.5 29.5L370 31.2L362.2 38.6L358.2 34.6L356 37.6Z" fill="#fff" stroke="#222" stroke-width=".9"/>
<path d="M354 43C357 39 359.5 39 361.8 41C364 43 366.5 42 369.5 38.6L370.4 41C367 45.5 363.5 46 361 44C358.8 42.2 357.6 42.6 355.6 45.2Z" fill="#8a9de9" stroke="#566dd0" stroke-width=".9"/>
<path d="M377.4 31.5L383.5 29.8L383.5 42L378.4 43.4Z" fill="#f4f4f4" stroke="#333" stroke-width="1"/><path d="M383.5 29.8L386 31L386 42.6L383.5 42Z" fill="#ccc" stroke="#333" stroke-width=".8"/>
<path d="M385.4 31L388.2 28.6L394 31.2L391 46L384.6 43.4Z" fill="url(#ib)" stroke="#16164a" stroke-width="1"/><path d="M388.2 28.6L387.6 43.8" stroke="#16164a" stroke-width=".7"/>
<path d="M398 44.5L398 49L393.5 49Z" fill="#767676"/>
<path d="M251.6 58.6L264.4 54.2L270.4 58.4L270.4 67.6L257.8 72L251.6 67.4Z" fill="none" stroke="#9a9a9a" stroke-width=".8"/>
<path d="M255.2 60.8L265 57.6C267.6 57 268.6 62.6 266.6 64.6L257.4 68.2C254.2 68.6 253.2 62 255.2 60.8Z" fill="url(#ib)" stroke="#16164a" stroke-width="1"/>
<ellipse cx="256.8" cy="64.4" rx="2.3" ry="3.6" transform="rotate(-12 256.8 64.4)" fill="#8a9de9" stroke="#16164a" stroke-width=".9"/>
<rect x="250.2" y="57.2" width="2.8" height="2.8" fill="#fff" stroke="#111" stroke-width=".9"/>
<rect x="269.0" y="57.0" width="2.8" height="2.8" fill="#fff" stroke="#111" stroke-width=".9"/>
<rect x="250.2" y="66.0" width="2.8" height="2.8" fill="#fff" stroke="#111" stroke-width=".9"/>
<rect x="269.0" y="66.19999999999999" width="2.8" height="2.8" fill="#fff" stroke="#111" stroke-width=".9"/>
<circle cx="264.4" cy="54.2" r="1.5" fill="#222"/>
<circle cx="257.8" cy="72" r="1.5" fill="#222"/>
<path d="M272.5 69.5L272.5 74L268.0 74Z" fill="#767676"/>
<path d="M280 60.8L287.4 60.8L287.4 58.6L292.8 62.9L287.4 67.2L287.4 65L280 65Z" fill="#d8141c" stroke="#9c0a10" stroke-width=".6"/>
<path d="M297.8 69.5L297.8 74L293.3 74Z" fill="#767676"/>
</svg>
<!-- Point Edit -->
<svg class="abs" style="left:610px;top:728px" width="140" height="37" viewBox="610 728 140 37">
<path d="M616 765L616 738L621.5 732.8L745.2 732.8L745.2 765Z" fill="#ebecf0"/>
<path d="M693.2 732.8L745.2 732.8L745.2 750.3L693.2 750.3Z" fill="#8fb2da"/>
<path d="M624.5 736.2C630 737 633.5 740.5 634.6 745.8" fill="none" stroke="#333" stroke-width="1.3"/><path d="M627.5 734.6L629.8 736.8M634.8 741.6L637.4 742.6M632 745.8L632 741.6M636.6 746.4L636.6 743" stroke="#333" stroke-width="1"/>
<path d="M723.0 741.3L725.4 741.3" stroke="#e9edf3" stroke-width="1.9"/><path d="M721.9 743.8L723.6 745.5" stroke="#e9edf3" stroke-width="1.9"/><path d="M719.4 744.9L719.4 747.3" stroke="#e9edf3" stroke-width="1.9"/><path d="M716.9 743.8L715.2 745.5" stroke="#e9edf3" stroke-width="1.9"/><path d="M715.8 741.3L713.4 741.3" stroke="#e9edf3" stroke-width="1.9"/><path d="M716.9 738.8L715.2 737.1" stroke="#e9edf3" stroke-width="1.9"/><path d="M719.4 737.7L719.4 735.3" stroke="#e9edf3" stroke-width="1.9"/><path d="M721.9 738.8L723.6 737.1" stroke="#e9edf3" stroke-width="1.9"/>
<circle cx="719.4" cy="741.3" r="3.7" fill="#c9d3e0" stroke="#eef1f6" stroke-width="1.6"/><circle cx="719.4" cy="741.3" r="1.3" fill="#f4f6fa"/>
<path d="M732.6 739L738.2 744.8M738.2 739L732.6 744.8" stroke="#f4f6fa" stroke-width="1.6"/>
<path d="M618.5 756.6L624 756.6" stroke="#222" stroke-width="1" stroke-dasharray="1.5 1"/><rect x="624.4" y="754.6" width="2.4" height="2.4" fill="#fff" stroke="#222" stroke-width=".9"/><path d="M619.5 761C625 760 630 762 633.5 766" fill="none" stroke="#111" stroke-width="1.8"/><path d="M628 757.5L634 764" stroke="#222" stroke-width=".9" stroke-dasharray="1.2 1.2"/>
<path d="M645 761C650 758.5 656 761 659 767" fill="none" stroke="#111" stroke-width="1.8"/><ellipse cx="649.5" cy="759.8" rx="2" ry="1.4" fill="#fff" stroke="#111" stroke-width=".9"/>
<path d="M668 757.4L674.5 757.4" stroke="#c9b43a" stroke-width="1"/><rect x="674.8" y="755" width="2.4" height="2.4" fill="#fff" stroke="#555" stroke-width=".8"/><path d="M669.5 762C675 760 681 763 684 768" fill="none" stroke="#e6dc62" stroke-width="2"/>
<path d="M703.8 758.4L703.8 763M701.6 760.6L706 760.6" stroke="#111" stroke-width="1.3"/><path d="M697 766C698 762.5 700.5 762.5 701.5 766M706 766C707 762.5 709.5 762.5 710.5 766" fill="none" stroke="#111" stroke-width="1.3"/>
<path d="M726.4 759.6L731.8 759.6" stroke="#111" stroke-width="1.4"/><path d="M722 766C722.8 763 725 762.6 726 762.6L732 762.6C733.5 762.6 735 763.5 735.6 766" fill="none" stroke="#111" stroke-width="1.3"/>
</svg>
<span class="t" style="left:643.1px;top:733.9px;color:#1a1a1a">Point Edit</span>
<!-- dialog -->
<div id="dlg">
 <div class="title"></div>
 <svg class="abs" style="left:6.7px;top:5.7px" width="14.2" height="14.2" viewBox="0 0 14 14"><rect width="14" height="14" fill="#0a0a0a"/><path d="M0 0L2.6 0L0 7Z" fill="#fff"/><path d="M2.5 .5L5.2 .5L7.4 5.4L9.6 8L14 7.5L14 9L8.8 13.5L0 7.9L0 6.5Z" fill="#fff"/><path d="M2.6 8L5 9.6M3.6 7L5.8 8.4" stroke="#222" stroke-width=".8"/><circle cx="11.4" cy="4.1" r="1.9" fill="#8a8a8a"/><circle cx="11.6" cy="4.4" r=".8" fill="#000"/></svg>
<span class="t " style="left:25.8px;top:5.3px;transform:scaleX(0.905);">Document Properties</span>
<svg class="abs" style="left:700px;top:7px" width="12" height="12" viewBox="0 0 12 12"><path d="M1.2 1.2L10.6 10.6M10.6 1.2L1.2 10.6" stroke="#111" stroke-width="1" fill="none"/></svg>
<div id="tree"><div class="sb"></div><div class="thumb"></div><div class="sel"></div>
<svg class="abs" style="right:4px;top:5px" width="9" height="8" viewBox="0 0 9 8"><path d="M1 6L4.5 2.5L8 6" fill="none" stroke="#444" stroke-width="1.6"/></svg>
<svg class="abs" style="right:4px;bottom:4px" width="9" height="8" viewBox="0 0 9 8"><path d="M1 2L4.5 5.5L8 2" fill="none" stroke="#444" stroke-width="1.6"/></svg>
<span class="t" style="left:20.2px;top:1.1px">Annotation Styles</span>
<svg class="abs" style="left:7px;top:4.900000000000006px" width="8" height="10" viewBox="0 0 8 10"><path d="M2 1.2L5.8 5L2 8.8" fill="none" stroke="#a6a6a6" stroke-width="1.3"/></svg>
<span class="t" style="left:20.2px;top:17.2px">Document User Text</span>
<span class="t" style="left:20.2px;top:33.2px">Grid</span>
<span class="t" style="left:20.2px;top:49.3px">Hatch</span>
<span class="t" style="left:20.2px;top:65.3px">Linetypes</span>
<span class="t" style="left:20.2px;top:81.4px">Location</span>
<span class="t" style="left:20.2px;top:97.5px">Mesh</span>
<span class="t" style="left:20.2px;top:113.5px">Notes</span>
<span class="t" style="left:20.2px;top:129.6px">Render</span>
<span class="t" style="left:20.2px;top:145.6px">Units</span>
<svg class="abs" style="left:7px;top:149.44px" width="8" height="10" viewBox="0 0 8 10"><path d="M2 1.2L5.8 5L2 8.8" fill="none" stroke="#6a6a6a" stroke-width="1.3"/></svg>
<span class="t" style="left:20.2px;top:161.7px">Web Browser</span>
<span class="t" style="left:6px;top:177.8px;font-weight:bold;transform:scaleX(.88)">Rhino Options</span>
<span class="t" style="left:20.2px;top:193.8px">Advanced</span>
<span class="t" style="left:20.2px;top:209.9px">Alerter</span>
<span class="t" style="left:20.2px;top:225.9px">Aliases</span>
<span class="t" style="left:20.2px;top:242.0px">Appearance</span>
<svg class="abs" style="left:7px;top:245.79999999999995px" width="8" height="10" viewBox="0 0 8 10"><path d="M2 1.2L5.8 5L2 8.8" fill="none" stroke="#a6a6a6" stroke-width="1.3"/></svg>
<span class="t" style="left:20.2px;top:258.1px">Context Menu</span>
<svg class="abs" style="left:7px;top:261.86px" width="8" height="10" viewBox="0 0 8 10"><path d="M2 1.2L5.8 5L2 8.8" fill="none" stroke="#a6a6a6" stroke-width="1.3"/></svg>
<span class="t" style="left:20.2px;top:274.1px">Cycles</span>
<span class="t" style="left:20.2px;top:290.2px">Files</span>
<svg class="abs" style="left:7px;top:293.98px" width="8" height="10" viewBox="0 0 8 10"><path d="M2 1.2L5.8 5L2 8.8" fill="none" stroke="#a6a6a6" stroke-width="1.3"/></svg>
<span class="t" style="left:20.2px;top:306.2px">General</span>
<span class="t" style="left:20.2px;top:322.3px">Idle Processor</span>
<span class="t" style="left:20.2px;top:338.4px">Keyboard</span>
<span class="t" style="left:20.2px;top:354.4px">Libraries</span>
<span class="t" style="left:20.2px;top:370.5px">Licenses</span>
<span class="t" style="left:20.2px;top:386.5px">Modeling Aids</span>
<svg class="abs" style="left:7px;top:390.3399999999999px" width="8" height="10" viewBox="0 0 8 10"><path d="M2 1.2L5.8 5L2 8.8" fill="none" stroke="#a6a6a6" stroke-width="1.3"/></svg>
<span class="t" style="left:20.2px;top:402.6px">Mouse</span>
<span class="t" style="left:20.2px;top:418.7px">Plug-ins</span>
<span class="t" style="left:20.2px;top:434.7px">RhinoScript</span>
<span class="t" style="left:20.2px;top:450.8px">Selection Menu</span>
<span class="t" style="left:20.2px;top:466.8px">Toolbars</span>
<svg class="abs" style="left:7px;top:470.64px" width="8" height="10" viewBox="0 0 8 10"><path d="M2 1.2L5.8 5L2 8.8" fill="none" stroke="#a6a6a6" stroke-width="1.3"/></svg>
<span class="t" style="left:20.2px;top:482.9px">Updates and Statistics</span>
<span class="t" style="left:20.2px;top:499.0px">View</span>
<svg class="abs" style="left:7px;top:502.76px" width="8" height="10" viewBox="0 0 8 10"><path d="M2 1.2L5.8 5L2 8.8" fill="none" stroke="#a6a6a6" stroke-width="1.3"/></svg>
</div>
<span class="t " style="left:233.4px;top:48.8px;">Units and tolerances</span><div class="grp" style="left:332.7px;top:55.5px;width:364.0px"></div>
<span class="t " style="left:258.2px;top:74.0px;">Model units:</span>
<div class="combo" style="left:364px;top:73px;width:251px;height:20px"></div>
<span class="t " style="left:367.8px;top:74.3px;">Millimeters</span>
<svg class="abs" style="left:601px;top:80px" width="10" height="7" viewBox="0 0 10 7"><path d="M1 1.2L5 5.2L9 1.2" fill="none" stroke="#444" stroke-width="1.2"/></svg>
<span class="t " style="left:258.2px;top:104.6px;">Absolute tolerance:</span>
<div class="edit" style="left:364px;top:102px;width:61px;height:22px;border-color:#0078d7"></div>
<span class="t " style="left:369.9px;top:104.3px;">0.000</span>
<div class="abs" style="left:395.20000000000005px;top:106px;width:1px;height:13px;background:#000"></div>
<span class="t " style="left:396.3px;top:104.3px;">1</span>
<span class="t " style="left:432.9px;top:104.6px;">units</span>
<span class="t " style="left:258.2px;top:131.5px;">Angle tolerance:</span>
<div class="edit" style="left:364px;top:129px;width:61px;height:21px"></div>
<span class="t " style="left:370.0px;top:130.9px;">1.0</span>
<span class="t " style="left:432.9px;top:131.5px;transform:scaleX(0.82);">degrees</span>
<span class="t " style="left:233.4px;top:186.7px;">Custom units</span><div class="grp" style="left:300.2px;top:193.3px;width:396.5px"></div>
<span class="t dis" style="left:257.2px;top:211.5px;">Name:</span>
<div class="edis" style="left:364px;top:209px;width:251px;height:20px"></div>
<span class="t " style="left:369.9px;top:210.9px;color:#6d6d6d">Millimeters</span>
<span class="t dis" style="left:257.2px;top:237.0px;">Units per meter:</span>
<div class="edis" style="left:364px;top:234px;width:63px;height:21px"></div>
<span class="t " style="left:370.0px;top:236.1px;color:#6d6d6d">1000.0</span>
<span class="t " style="left:233.4px;top:263.8px;">Distance display</span><div class="grp" style="left:312.6px;top:270.4px;width:384.1px"></div>
<div class="radio" style="left:256.3px;top:287.7px;border-color:#333;"></div>
<div class="abs" style="left:259.3px;top:290.7px;width:7px;height:7px;border-radius:50%;background:#222"></div>
<span class="t " style="left:271.7px;top:286.2px;">Decimal</span>
<div class="radio" style="left:256.3px;top:305.7px;border-color:#333;"></div>
<span class="t " style="left:271.7px;top:304.2px;">Fractional</span>
<div class="radio" style="left:256.3px;top:324.3px;border-color:#c4c4c4;background:#f4f4f4;"></div>
<span class="t " style="left:271.7px;top:322.8px;color:#8a8a8a">Feet &amp; Inches</span>
<span class="t " style="left:257.2px;top:345.8px;">Display precision:</span>
<div class="combo" style="left:364px;top:345.5px;width:251px;height:20px"></div>
<span class="t " style="left:368.4px;top:347.0px;">1.00000</span>
<svg class="abs" style="left:601px;top:352.5px" width="10" height="7" viewBox="0 0 10 7"><path d="M1 1.2L5 5.2L9 1.2" fill="none" stroke="#444" stroke-width="1.2"/></svg>
<div class="abs" style="left:222px;top:560px;width:485.5px;height:1px;background:#a9a9a9"></div>
<div class="btn" style="left:468px;top:569.5px;width:77px;height:21.5px;border:2px solid #0078d7;"></div>
<span class="t" style="left:468px;top:572.0px;width:85.1px;text-align:center">OK</span>
<div class="btn" style="left:549px;top:569.5px;width:77px;height:21.5px;"></div>
<span class="t" style="left:549px;top:572.0px;width:85.1px;text-align:center">Cancel</span>
<div class="btn" style="left:631px;top:569.5px;width:77px;height:21.5px;"></div>
<span class="t" style="left:631px;top:572.0px;width:85.1px;text-align:center">Help</span>
<svg class="abs" style="right:1px;bottom:2px" width="10" height="10" viewBox="0 0 12 12"><path d="M11 1L1 11M11 4L4 11M11 7L7 11M11 10L10 11" stroke="#9a9a9a" stroke-width="1"/><path d="M12 2L2 12M12 5L5 12M12 8L8 12" stroke="#fff" stroke-width="1"/></svg>
</div>
</body></html>
